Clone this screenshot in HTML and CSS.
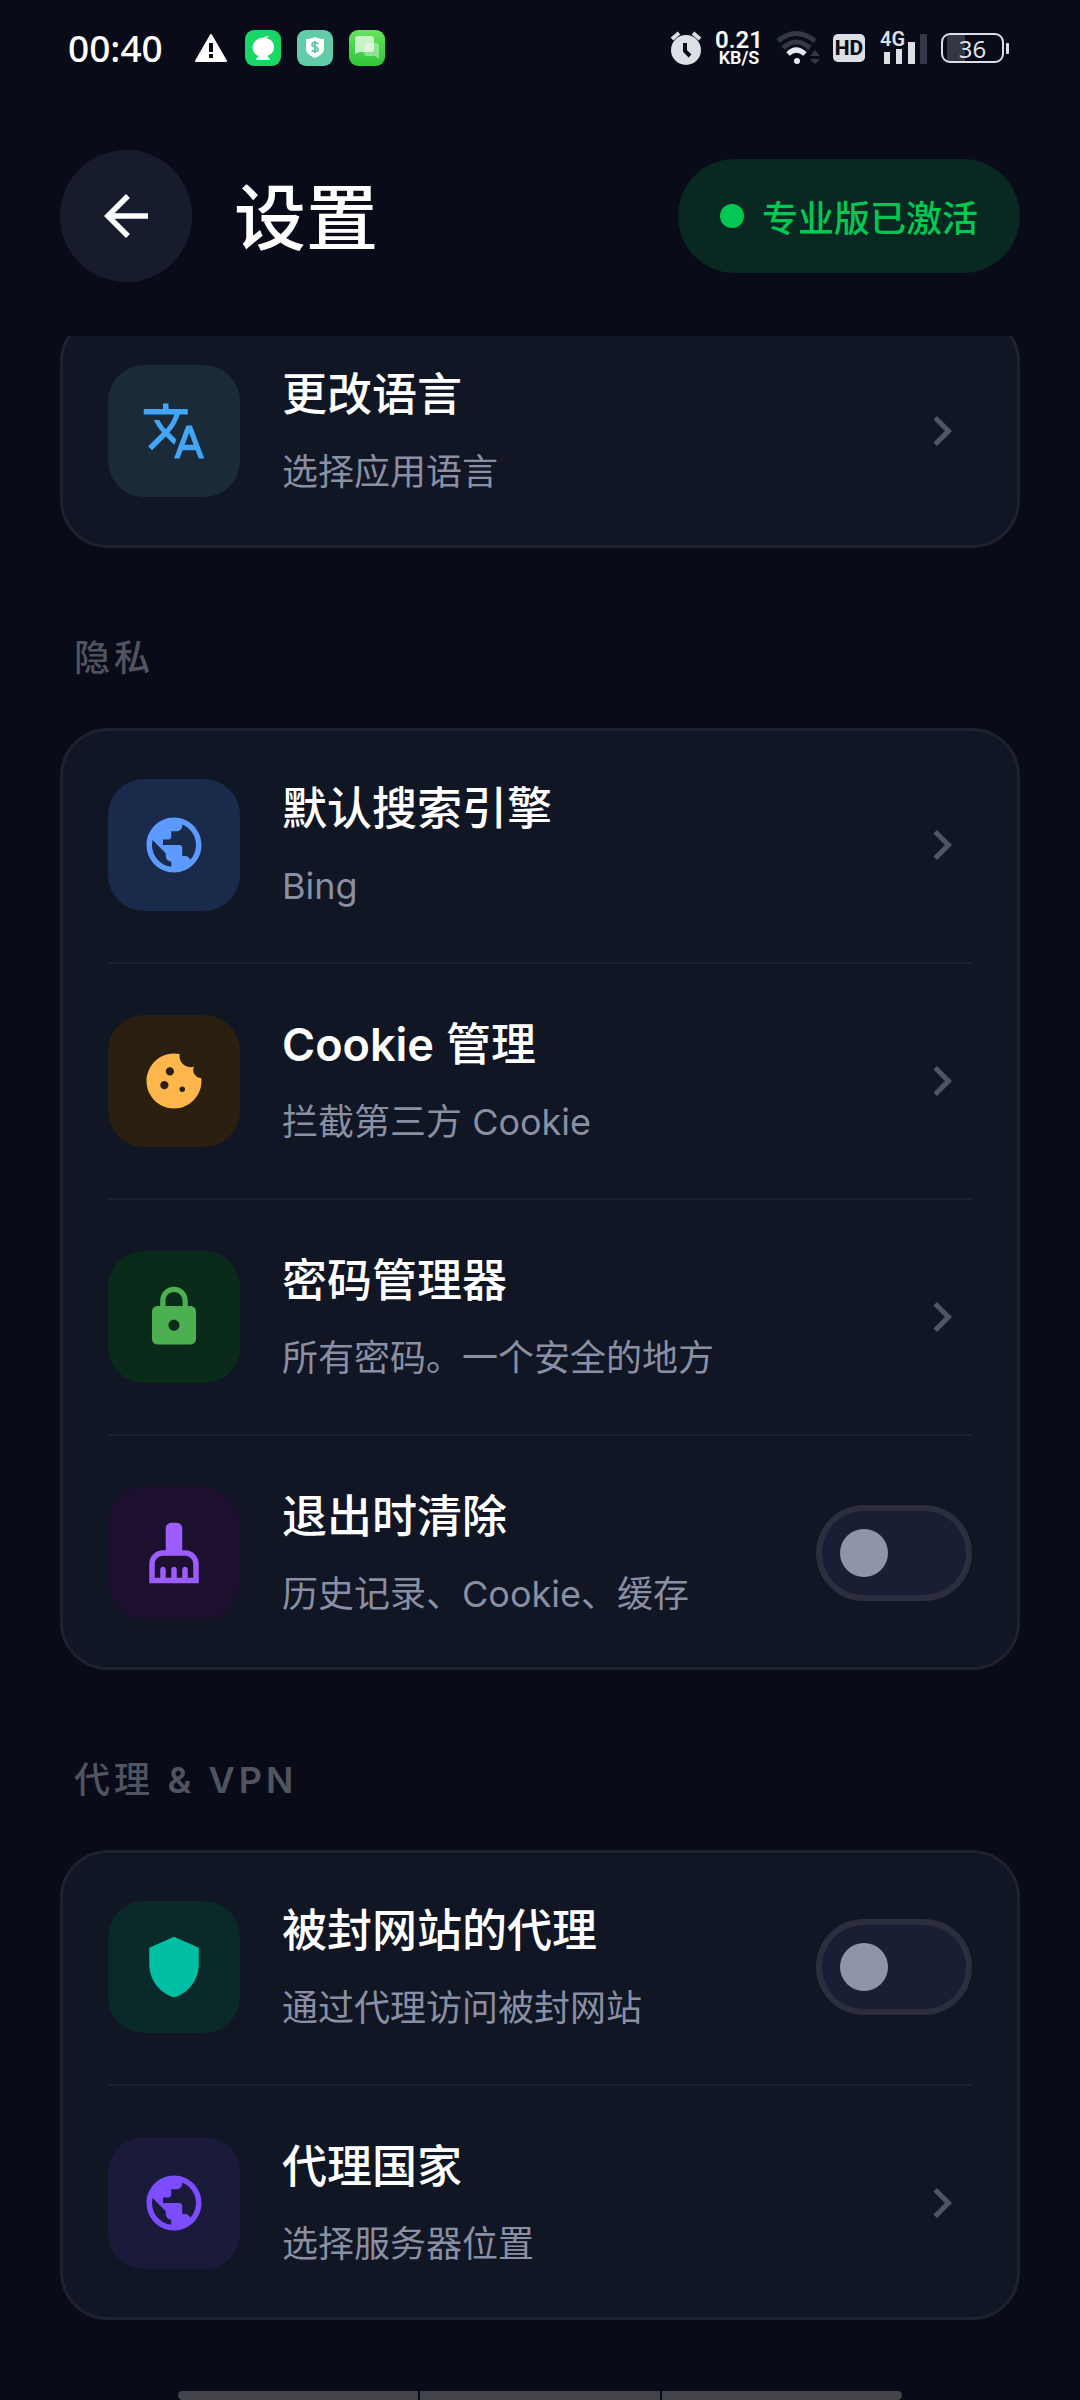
FILE: index.html
```html
<!DOCTYPE html>
<html lang="zh-CN">
<head>
    <meta charset="UTF-8">
    <meta name="viewport" content="width=device-width, initial-scale=1.0">
    <title>设置</title>
    <link rel="stylesheet" href="styles.css">
</head>
<body>

<div class="status-bar">
    <div class="status-left">
        <span class="clock">00:40</span>
        <svg class="warning" width="32" height="28" viewBox="0 0 32 28">
            <path d="M16 1 31 27H1z" fill="#fff" stroke="#fff" stroke-width="2" stroke-linejoin="round"/>
            <path d="M14 9h4v9h-4zM14 20h4v4h-4z" fill="#090c18"/>
        </svg>
        <svg width="36" height="36" viewBox="0 0 36 36">
            <rect width="36" height="36" rx="9" fill="#19d667"/>
            <path d="M24 6c-3 0-4 .4-5 1.500-7 .4-11.500 4.800-11.500 10 0 4 2.500 7 6 8.500-.2 1.300-2.500 1.500-2.500 4h14c0-2.500-2.300-2.700-2.500-4 3.500-1.500 6.500-4.500 6.500-9 0-4.500-3-8-8-9 .8-.6 2-1 3-2z" fill="#fff"/>
        </svg>
        <svg width="36" height="36" viewBox="0 0 36 36">
            <rect width="36" height="36" rx="9" fill="#62cba8"/>
            <path d="M18 7c3 1.500 6 2 9 2v10c0 4-4 7-9 9-5-2-9-5-9-9V9c3 0 6-.5 9-2z" fill="#fff"/>
            <path d="M21 14c-.8-1.200-1.800-1.500-3-1.500-3.800 0-3.800 4 0 4.500 3.800.5 3.800 4.500 0 4.500-1.300 0-2.400-.5-3-1.600M18 11v12" fill="none" stroke="#62cba8" stroke-width="2"/>
        </svg>
        <svg width="36" height="36" viewBox="0 0 36 36">
            <defs>
                <linearGradient id="chat" x1="0" y1="0" x2="0" y2="1">
                    <stop offset="0" stop-color="#66e35c"/>
                    <stop offset="1" stop-color="#2fc43a"/>
                </linearGradient>
            </defs>
            <rect width="36" height="36" rx="9" fill="url(#chat)"/>
            <path d="M16 13h12a3 3 0 0 1 2 3v13l-4-3h-8a3 3 0 0 1-3-3z" fill="#fff" fill-opacity=".4"/>
            <path d="M9 6h13a3 3 0 0 1 3 3v10a3 3 0 0 1-3 3H11l-5 2V9a3 3 0 0 1 3-3z" fill="#fff" fill-opacity=".68"/>
        </svg>
    </div>
    <div class="status-right">
        <svg width="32" height="36" viewBox="0 0 32 36">
            <circle cx="16" cy="20" r="15" fill="#dddfe5"/>
            <path d="M2 9 9 3M30 9l-7-6" stroke="#dddfe5" stroke-width="4"/>
            <path d="M15 13v8l5 5" fill="none" stroke="#090c18" stroke-width="4"/>
        </svg>
        <span class="speed"><b>0.21</b><small>KB/S</small></span>
        <svg width="44" height="36" viewBox="0 0 44 36">
            <path d="M2 11Q20-4 39 11" fill="none" stroke="#343844" stroke-width="5"/>
            <path d="M7 18q13-12 27 0" fill="none" stroke="#343844" stroke-width="5"/>
            <path d="M12 24q8-8 17 0" fill="none" stroke="#e8eaf0" stroke-width="5"/>
            <circle cx="21" cy="31" r="3" fill="#e8eaf0"/>
            <path d="m39 20 5 6H34zM39 34l5-5H34z" fill="#343844"/>
        </svg>
        <span class="hd">HD</span>
        <span class="signal">
            <span class="signal-type">4G</span>
            <svg width="48" height="36" viewBox="0 0 48 36">
                <path d="M4 22h6v12H4zM16 19h6v15h-6zM28 12h7v22h-7z" fill="#dddfe5"/>
                <path d="M40 4h7v30h-7z" fill="#343844"/>
            </svg>
        </span>
        <span class="battery">36</span>
    </div>
</div>

<header>
    <button class="back-button" aria-label="返回">
        <svg class="icon" viewBox="0 0 24 24"><path d="M20 11H7.830l5.590-5.590L12 4l-8 8 8 8 1.410-1.410L7.830 13H20z"/></svg>
    </button>
    <h1>设置</h1>
    <div class="badge">专业版已激活</div>
</header>

<main>
    <section class="card scrolled">
        <a class="row" href="#language">
            <span class="tile language"><svg class="icon" viewBox="0 0 24 24"><path d="m12.870 15.070-2.540-2.510.03-.03A17.520 17.520 0 0 0 14.070 6H17V4h-7V2H8v2H1v1.990h11.170C11.500 7.920 10.440 9.750 9 11.350 8.070 10.320 7.300 9.190 6.690 8h-2c.73 1.630 1.730 3.170 2.980 4.560l-5.090 5.020L4 19l5-5 3.110 3.110zM18.500 10h-2L12 22h2l1.120-3h4.750L21 22h2zm-2.620 7 1.620-4.330L19.120 17z"/></svg></span>
            <span class="text"><strong>更改语言</strong><span>选择应用语言</span></span>
            <svg class="chevron" viewBox="0 0 24 24"><path d="M10 6 8.590 7.410 13.170 12l-4.580 4.590L10 18l6-6z"/></svg>
        </a>
    </section>

    <h2>隐私</h2>
    <section class="card">
        <a class="row" href="#search">
            <span class="tile search"><svg class="icon" viewBox="0 0 24 24"><path d="M12 2C6.480 2 2 6.480 2 12s4.480 10 10 10 10-4.480 10-10S17.520 2 12 2zm-1 17.930c-3.950-.49-7-3.850-7-7.930 0-.62.08-1.210.21-1.790L9 15v1c0 1.100.9 2 2 2zm6.900-2.540c-.26-.81-1-1.390-1.900-1.390h-1v-3c0-.55-.45-1-1-1H8v-2h2c.55 0 1-.45 1-1V7h2c1.100 0 2-.9 2-2v-.41c2.930 1.190 5 4.060 5 7.410 0 2.080-.8 3.970-2.100 5.390z"/></svg></span>
            <span class="text"><strong>默认搜索引擎</strong><span>Bing</span></span>
            <svg class="chevron" viewBox="0 0 24 24"><path d="M10 6 8.590 7.410 13.170 12l-4.580 4.590L10 18l6-6z"/></svg>
        </a>
        <hr>
        <a class="row" href="#cookie">
            <span class="tile cookie"><svg class="icon" viewBox="0 0 24 24"><path fill-rule="evenodd" d="M21.950 10.990c-1.790-.03-3.700-1.950-2.680-4.220-2.980 1-5.770-1.590-5.190-4.560C6.950.71 2 6.580 2 12c0 5.520 4.480 10 10 10 5.890 0 10.540-5.080 9.950-11.010zM8.500 15a1.500 1.500 0 1 1 0-3 1.500 1.500 0 0 1 0 3zm2-5a1.500 1.500 0 1 1 0-3 1.500 1.500 0 0 1 0 3zm4.500 6a1 1 0 1 1 0-2 1 1 0 0 1 0 2z"/></svg></span>
            <span class="text"><strong><b>Cookie</b> 管理</strong><span>拦截第三方 Cookie</span></span>
            <svg class="chevron" viewBox="0 0 24 24"><path d="M10 6 8.590 7.410 13.170 12l-4.580 4.590L10 18l6-6z"/></svg>
        </a>
        <hr>
        <a class="row" href="#passwords">
            <span class="tile password"><svg class="icon" viewBox="0 0 24 24"><path d="M18 8h-1V6c0-2.760-2.240-5-5-5S7 3.240 7 6v2H6c-1.100 0-2 .9-2 2v10c0 1.100.9 2 2 2h12c1.100 0 2-.9 2-2V10c0-1.100-.9-2-2-2zm-6 9c-1.100 0-2-.9-2-2s.9-2 2-2 2 .9 2 2-.9 2-2 2zm3.100-9H8.900V6c0-1.710 1.390-3.100 3.100-3.100s3.100 1.390 3.100 3.100z"/></svg></span>
            <span class="text"><strong>密码管理器</strong><span>所有密码。一个安全的地方</span></span>
            <svg class="chevron" viewBox="0 0 24 24"><path d="M10 6 8.590 7.410 13.170 12l-4.580 4.590L10 18l6-6z"/></svg>
        </a>
        <hr>
        <label class="row" for="clear-on-exit">
            <span class="tile clear"><svg class="icon" viewBox="0 0 24 24"><path d="M16 11h-1V3c0-1.100-.9-2-2-2h-2c-1.100 0-2 .9-2 2v8H8c-2.760 0-5 2.240-5 5v7h18v-7c0-2.760-2.240-5-5-5zm3 10h-2v-3c0-.55-.45-1-1-1s-1 .45-1 1v3h-2v-3c0-.55-.45-1-1-1s-1 .45-1 1v3H9v-3c0-.55-.45-1-1-1s-1 .45-1 1v3H5v-5c0-1.650 1.350-3 3-3h8c1.650 0 3 1.350 3 3z"/></svg></span>
            <span class="text"><strong>退出时清除</strong><span>历史记录、Cookie、缓存</span></span>
            <input type="checkbox" class="switch" id="clear-on-exit">
        </label>
    </section>

    <h2>代理 <b>&amp; VPN</b></h2>
    <section class="card">
        <label class="row" for="use-proxy">
            <span class="tile proxy"><svg class="icon" viewBox="0 0 24 24"><path d="M12 1 3 5v6c0 5.550 3.840 10.740 9 12 5.160-1.260 9-6.450 9-12V5z"/></svg></span>
            <span class="text"><strong>被封网站的代理</strong><span>通过代理访问被封网站</span></span>
            <input type="checkbox" class="switch" id="use-proxy">
        </label>
        <hr>
        <a class="row" href="#country">
            <span class="tile country"><svg class="icon" viewBox="0 0 24 24"><path d="M12 2C6.480 2 2 6.480 2 12s4.480 10 10 10 10-4.480 10-10S17.520 2 12 2zm-1 17.930c-3.950-.49-7-3.850-7-7.930 0-.62.08-1.210.21-1.790L9 15v1c0 1.100.9 2 2 2zm6.900-2.540c-.26-.81-1-1.390-1.900-1.390h-1v-3c0-.55-.45-1-1-1H8v-2h2c.55 0 1-.45 1-1V7h2c1.100 0 2-.9 2-2v-.41c2.930 1.190 5 4.060 5 7.410 0 2.080-.8 3.970-2.100 5.390z"/></svg></span>
            <span class="text"><strong>代理国家</strong><span>选择服务器位置</span></span>
            <svg class="chevron" viewBox="0 0 24 24"><path d="M10 6 8.590 7.410 13.170 12l-4.580 4.590L10 18l6-6z"/></svg>
        </a>
    </section>
</main>

<div class="gesture-bar"><i></i><i></i><i></i></div>

</body>
</html>
```

FILE: styles.css
```css
* {
    box-sizing: border-box;
}
body {
    display: flex;
    flex-direction: column;
    min-height: 100vh;
    margin: 0;
    background-color: #090c18;
    color: #fff;
    font-family: Inter, "Noto Sans CJK SC", sans-serif;
}
svg {
    display: block;
    flex: none;
}
/* status bar */
.status-bar {
    display: flex;
    justify-content: space-between;
    height: 96px;
    padding: 0 72px 0 68px;
    font-family: "Noto Sans", "Noto Sans CJK SC", sans-serif;
}
.status-left, .status-right {
    display: flex;
    align-items: center;
}
.status-left {
    gap: 16px;
}
.clock {
    margin-right: 16px;
    font-size: 37px;
    font-weight: 500;
    line-height: 48px;
}
.warning {
    margin-right: 2px;
}
.status-right {
    gap: 13px;
}
.speed {
    display: flex;
    flex-direction: column;
    align-items: center;
    font-family: Roboto, sans-serif;
}
.speed b {
    font-size: 24px;
    font-weight: 600;
    line-height: 20px;
}
.speed small {
    font-size: 18px;
    font-weight: 600;
    line-height: 16px;
}
.hd {
    width: 32px;
    height: 28px;
    margin-right: 2px;
    border-radius: 5px;
    background-color: #dddfe5;
    color: #090c18;
    font-family: Roboto, sans-serif;
    font-size: 21px;
    font-weight: 800;
    line-height: 28px;
    text-align: center;
}
.signal {
    position: relative;
}
.signal-type {
    position: absolute;
    top: 0;
    left: 0;
    color: #dddfe5;
    font-family: Roboto, sans-serif;
    font-size: 20px;
    font-weight: 600;
    line-height: 18px;
}
.battery {
    position: relative;
    width: 63px;
    height: 30px;
    margin-right: 4px;
    border: 2px solid #dddfe5;
    border-radius: 9px;
    background: linear-gradient(90deg, #343844 18px, transparent 18px) 4px 0 / 100% 100% no-repeat;
    color: #dddfe5;
    font-size: 24px;
    line-height: 27px;
    text-align: center;
}
.battery::after {
    content: "";
    position: absolute;
    top: 8px;
    right: -7px;
    width: 3px;
    height: 11px;
    border-radius: 1px;
    background-color: #dddfe5;
}
/* header */
header {
    display: flex;
    align-items: center;
    height: 240px;
    padding: 0 60px;
}
.back-button {
    display: grid;
    place-items: center;
    width: 132px;
    height: 132px;
    margin-right: 42px;
    padding: 0;
    border: none;
    border-radius: 50%;
    background-color: #171c2d;
    color: #fff;
    cursor: pointer;
}
.icon {
    width: 66px;
    height: 66px;
    fill: currentColor;
}
h1 {
    margin: 0;
    padding-top: 4px;
    font-size: 72px;
    font-weight: 500;
    line-height: 96px;
}
.badge {
    display: flex;
    align-items: center;
    gap: 18px;
    height: 114px;
    margin-left: auto;
    padding: 0 42px;
    border-radius: 60px;
    background-color: #0a2822;
    color: #00c853;
    font-size: 36px;
    font-weight: 500;
}
.badge::before {
    content: "";
    width: 24px;
    height: 24px;
    border-radius: 50%;
    background-color: #00c853;
}
/* settings list */
main {
    padding: 0 60px;
    overflow: hidden;
}
h2 {
    margin: 88px 0 48px;
    padding-left: 14px;
    color: #505461;
    font-size: 36px;
    font-weight: 500;
    letter-spacing: 4px;
    line-height: 44px;
}
.card {
    border: 3px solid #1c2230;
    border-radius: 48px;
    background-color: #101624;
}
/* first card is partly scrolled under the header */
.scrolled {
    margin-top: -22px;
}
.row {
    display: flex;
    align-items: center;
    padding: 48px 45px;
    color: #fff;
    text-decoration: none;
    cursor: pointer;
}
hr {
    height: 2px;
    margin: 3px 45px;
    border: none;
    background-color: #1a202d;
}
.tile {
    display: grid;
    place-items: center;
    width: 132px;
    height: 132px;
    border-radius: 36px;
}
.language {
    background-color: #1b2a38;
    color: #42a5f5;
}
.search {
    background-color: #1a2a4a;
    color: #5c9aff;
}
.cookie {
    background-color: #2a1f10;
    color: #ffb74d;
}
.password {
    background-color: #0a2a1a;
    color: #4caf50;
}
.clear {
    background-color: #1c102e;
    color: #9c5cff;
}
.proxy {
    background-color: #0a2a2a;
    color: #00bfa5;
}
.country {
    background-color: #1a1a3a;
    color: #7c4dff;
}
.text {
    display: flex;
    flex: 1;
    flex-direction: column;
    gap: 25px;
    padding-left: 42px;
}
.text strong {
    font-size: 45px;
    font-weight: 500;
    line-height: 56px;
}
/* latin words sit heavier than the chinese ones */
h2 b, .text b {
    font-weight: 600;
}
.text span {
    color: #8a8fa3;
    font-size: 36px;
    line-height: 48px;
}
.chevron {
    width: 60px;
    height: 60px;
    fill: #505564;
}
.switch {
    appearance: none;
    display: flex;
    align-items: center;
    width: 156px;
    height: 96px;
    margin: 0;
    padding: 0 18px;
    border: 6px solid #2a2e3e;
    border-radius: 48px;
    background-color: #1a1e35;
    cursor: pointer;
}
.switch::before {
    content: "";
    width: 48px;
    height: 48px;
    border-radius: 50%;
    background-color: #9094a9;
}
.switch:checked {
    justify-content: flex-end;
    background-color: #00c853;
}
/* gesture bar */
.gesture-bar {
    display: flex;
    gap: 2px;
    width: 67%;
    height: 9px;
    margin: auto auto 0;
    border-radius: 5px;
    overflow: hidden;
}
.gesture-bar i {
    flex: 1;
    background-color: #424449;
}
```
